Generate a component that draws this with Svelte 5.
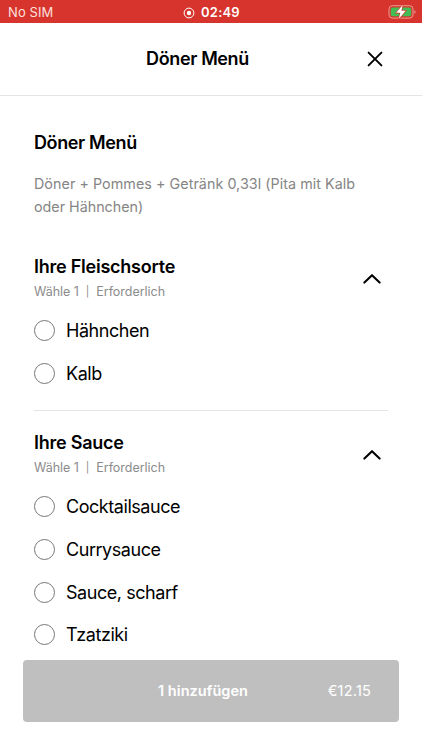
<script>
  let selected = $state({});
  const groups = [
    { title: 'Ihre Fleischsorte', options: ['Hähnchen', 'Kalb'] },
    { title: 'Ihre Sauce', options: ['Cocktailsauce', 'Currysauce', 'Sauce, scharf', 'Tzatziki'] }
  ];
</script>

<div class="screen">
  <div class="status">
    <span class="carrier">No SIM</span>
    <div class="clock">
      <svg width="12" height="12" viewBox="0 0 12 12"><circle cx="6" cy="6" r="4.9" fill="none" stroke="#fff" stroke-width="1" /><circle cx="6" cy="6" r="2.2" fill="#fff" /></svg>
      <span class="time">02:49</span>
    </div>
    <svg class="battery" width="28" height="16" viewBox="0 0 28 16">
      <rect x="1" y="1.7" width="24" height="12.4" rx="3.4" fill="none" stroke="#eb9c92" stroke-width="1" />
      <path d="M26.3 6.2q1.3.5 1.3 1.8t-1.3 1.8z" fill="#eb9c92" />
      <rect x="2.8" y="3.5" width="20.4" height="8.8" rx="1.8" fill="#42bd55" />
      <path d="M14.8.8 8.2 8.8h4.2L10.7 15l7-8.2h-4.3z" fill="#fff" stroke="#d7342d" stroke-width="1.2" paint-order="stroke" />
    </svg>
  </div>

  <header>
    <h1>Döner Menü</h1>
    <button class="close" aria-label="Schließen">
      <svg width="16" height="16" viewBox="0 0 16 16"><path d="M1.6 1.6l12.8 12.8M14.4 1.6L1.6 14.4" fill="none" stroke="#000" stroke-width="1.9" stroke-linecap="round" /></svg>
    </button>
  </header>

  <main>
    <h2 class="product">Döner Menü</h2>
    <p class="description"><span>Döner + Pommes + Getränk 0,33l (Pita mit Kalb</span><br /><span class="second">oder Hähnchen)</span></p>

    {#each groups as group, i}
      <section>
        <div class="group-head">
          <div>
            <h2>{group.title}</h2>
            <div class="hint"><span>Wähle 1</span><span class="bar">|</span><span>Erforderlich</span></div>
          </div>
          <svg class="chevron" width="18" height="10" viewBox="0 0 18 10"><path d="M1.4 8.6L9 1.2l7.6 7.4" fill="none" stroke="#000" stroke-width="2.1" stroke-linecap="round" stroke-linejoin="round" /></svg>
        </div>
        <div class="options">
          {#each group.options as option}
            <label>
              <input type="radio" name={group.title} value={option} bind:group={selected[i]} />
              <span>{option}</span>
            </label>
          {/each}
        </div>
      </section>
    {/each}
  </main>

  <footer>
    <button class="add"><span></span><strong>1 hinzufügen</strong><span class="price">€12.15</span></button>
  </footer>
</div>

<style>
  .screen {
    width: 422px;
    height: 750px;
    overflow: hidden;
    display: flex;
    flex-direction: column;
    background: #fff;
    color: #000;
    font-family: Inter, "Liberation Sans", sans-serif;
  }
  h1, h2, p { margin: 0; }
  button { border: 0; padding: 0; font: inherit; background: none; }
  svg { display: block; }
  .status {
    flex: none;
    height: 23px;
    padding: 0 6px 0 8px;
    display: grid;
    grid-template-columns: 1fr auto 1fr;
    align-items: center;
    background: #d7342d;
    color: #fff;
    font-size: 13px;
    line-height: 23px;
  }
  .carrier { color: #fbe0dd; padding-top: 1px; letter-spacing: 0.1px; }
  .clock { display: flex; align-items: center; gap: 6px; padding-top: 1px; }
  .time { font-weight: 600; letter-spacing: 0.2px; margin-right: 1px; }
  .battery { justify-self: end; }
  header {
    flex: none;
    height: 73px;
    padding: 0 39px;
    box-sizing: border-box;
    display: grid;
    grid-template-columns: 1fr auto 1fr;
    align-items: center;
    border-bottom: 1px solid #e4e4e4;
  }
  h1 { grid-column: 2; font-size: 18px; line-height: 24px; font-weight: 600; margin-right: 27px; letter-spacing: -0.38px; white-space: nowrap; }
  .close { justify-self: end; }
  main { flex: none; height: 564px; padding: 35px 34px 0; box-sizing: border-box; }
  h2 { font-size: 18px; line-height: 24px; font-weight: 600; letter-spacing: -0.24px; white-space: nowrap; }
  .product { letter-spacing: -0.38px; }
  .description {
    margin-top: 18px;
    font-size: 14.3px;
    line-height: 22.6px;
    letter-spacing: 0.055px;
    color: #858585;
    white-space: nowrap;
  }
  .second { letter-spacing: 0; }
  section:first-of-type { margin-top: 37px; }
  section { height: 155px; border-bottom: 1px solid #e4e4e4; }
  section + section { margin-top: 20px; border: 0; }
  .group-head { display: flex; justify-content: space-between; height: 47px; }
  .chevron { margin: 19px 7px 0 0; }
  .hint {
    display: flex;
    gap: 7px;
    margin-top: 4px;
    font-size: 12.5px;
    line-height: 17px;
    letter-spacing: -0.03px;
    color: #8b8b8b;
  }
  .bar { font-size: 10.5px; }
  .options { display: flex; flex-direction: column; padding-top: 18px; }
  label { height: 42.7px; flex: none; display: flex; align-items: flex-start; gap: 11px; font-size: 18px; line-height: 21px; letter-spacing: -0.45px; }
  input {
    appearance: none;
    width: 21px;
    height: 21px;
    margin: 0;
    box-sizing: border-box;
    border: 1px solid #777;
    border-radius: 50%;
  }
  input:checked { border: 6px solid #000; }
  footer { padding: 0 23px; }
  .add {
    width: 376px;
    height: 62px;
    padding: 0 28px 2px;
    border-radius: 4px;
    display: grid;
    grid-template-columns: 1fr auto 1fr;
    align-items: center;
    background: #bfbfbf;
    color: #fff;
    font-size: 14.5px;
  }
  .add strong { font-weight: 600; margin-right: 16px; letter-spacing: 0.05px; }
  .price { justify-self: end; letter-spacing: 0.2px; }
</style>
